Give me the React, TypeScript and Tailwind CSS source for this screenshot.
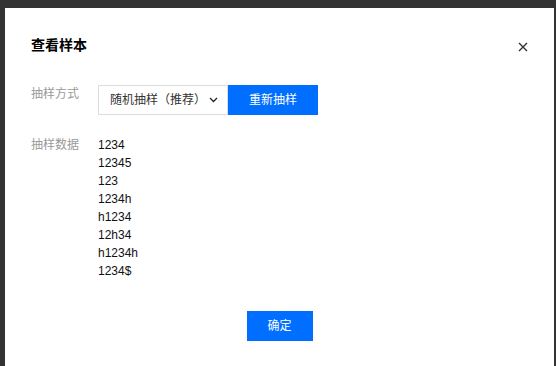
export default function App() {
  const samples = ["1234", "12345", "123", "1234h", "h1234", "12h34", "h1234h", "1234$"];

  return (
    <div
      className="flex h-[366px] w-[556px] bg-[#333333] pl-[5px] pr-[2px] pt-[8px]"
      style={{ fontFamily: '"Liberation Sans", "Noto Sans CJK SC", sans-serif' }}
    >
      <div className="flex flex-1 flex-col bg-white px-[26px] pt-[27px]">
        {/* Header */}
        <div className="flex h-[20px] items-center justify-between">
          <h2 className="text-[14px] font-bold leading-[20px] text-black">查看样本</h2>
          <button className="mr-[-1px] mt-[3px] flex h-[12px] w-[12px] items-center justify-center text-[#333]">
            <svg width="10" height="10" viewBox="0 0 10 10" fill="none">
              <path d="M1 1L9 9M9 1L1 9" stroke="currentColor" strokeWidth="1.4" />
            </svg>
          </button>
        </div>

        {/* Sampling method */}
        <div className="mt-[30px] flex">
          <div className="w-[67px] text-[12px] leading-[18px] text-[#999]">抽样方式</div>
          <div className="flex">
            <div className="flex h-[30px] w-[130px] items-center justify-between border border-[#dcdcdc] pl-[11px] pr-[9px] text-[12px] text-[#333]">
              <span>随机抽样（推荐）</span>
              <svg width="9" height="6" viewBox="0 0 9 6" fill="none">
                <path d="M1 1L4.5 4.5L8 1" stroke="#222" strokeWidth="1.3" />
              </svg>
            </div>
            <button className="h-[30px] w-[90px] bg-[#006eff] text-[12px] text-white">重新抽样</button>
          </div>
        </div>

        {/* Sample data */}
        <div className="mt-[21px] flex">
          <div className="w-[67px] text-[12px] leading-[18px] text-[#999]">抽样数据</div>
          <div className="flex flex-col text-[12px] leading-[18px] text-[#111]">
            {samples.map((s) => (
              <span key={s}>{s}</span>
            ))}
          </div>
        </div>

        {/* Footer */}
        <div className="mt-[31px] flex justify-center">
          <button className="h-[30px] w-[66px] bg-[#006eff] text-[12px] text-white">确定</button>
        </div>
      </div>
    </div>
  );
}
